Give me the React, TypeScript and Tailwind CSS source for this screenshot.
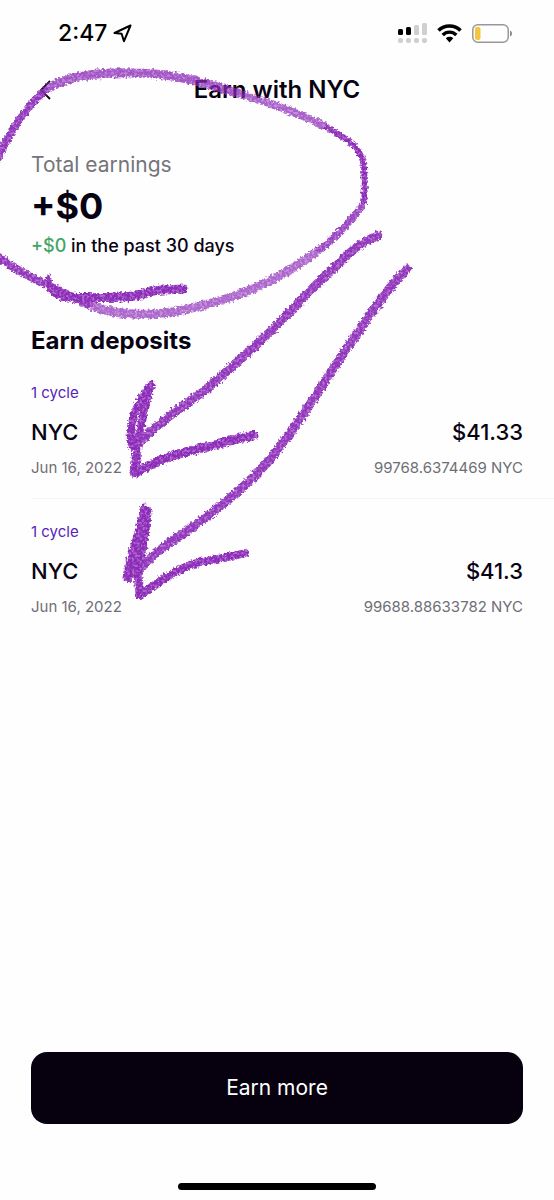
type Deposit = {
  id: number;
  cycle: string;
  name: string;
  date: string;
  value: string;
  amount: string;
};

const deposits: Deposit[] = [
  { id: 1, cycle: '1 cycle', name: 'NYC', date: 'Jun 16, 2022', value: '$41.33', amount: '99768.6374469 NYC' },
  { id: 2, cycle: '1 cycle', name: 'NYC', date: 'Jun 16, 2022', value: '$41.3', amount: '99688.88633782 NYC' },
];

function StatusBar() {
  return (
    <div className="flex h-16 items-center justify-between pt-0.5 pr-[41px] pl-[58px] text-black">
      <div className="flex items-center gap-1.5">
        <span className="text-[23px] leading-8 font-medium">2:47</span>
        <svg width="19" height="19" viewBox="0 0 19 19" fill="none" stroke="currentColor" strokeWidth="2" strokeLinejoin="round" aria-hidden="true">
          <path d="M17.5 1.5 L1.5 9 L8.6 9.8 L11 17.2 Z" />
        </svg>
      </div>
      <div className="flex items-center gap-2.5">
        <svg width="29" height="20" viewBox="0 0 29 20" aria-hidden="true">
          <rect x="0" y="6" width="5" height="6" rx="1.5" />
          <rect x="8" y="4" width="5" height="8" rx="1.5" />
          <g fill="#cfcfcf">
            <rect x="16" y="2" width="5" height="10" rx="1.5" />
            <rect x="24" y="0" width="5" height="12" rx="1.5" />
            <rect x="0" y="15" width="5" height="5" rx="2" />
            <rect x="8" y="15" width="5" height="5" rx="2" />
            <rect x="16" y="15" width="5" height="5" rx="2" />
            <rect x="24" y="15" width="5" height="5" rx="2" />
          </g>
        </svg>
        <svg width="25" height="19" viewBox="0 0 25 19" fill="none" stroke="currentColor" aria-hidden="true">
          <path d="M1.5 6.5 C7.5 0.4 17.5 0.4 23.5 6.5" strokeWidth="3.6" />
          <path d="M5.7 11 C9.5 7.2 15.5 7.2 19.3 11" strokeWidth="3.4" />
          <path d="M8.8 14.2 C11 12.3 14 12.3 16.2 14.2 L12.5 18.4 Z" fill="currentColor" stroke="none" />
        </svg>
        <svg width="41" height="19" viewBox="0 0 41 19" aria-hidden="true">
          <rect x="0.8" y="0.8" width="35.4" height="17.4" rx="5" fill="none" stroke="#99979c" strokeWidth="1.5" />
          <rect x="3" y="3" width="5.5" height="13" rx="2" fill="#f5c63c" />
          <path d="M38 6.5 C40.8 7.5 40.8 11.5 38 12.5 Z" fill="#8f8d92" />
        </svg>
      </div>
    </div>
  );
}

function DepositRow({ deposit }: { deposit: Deposit }) {
  return (
    <li className="border-b border-[#f4f4f6] pt-[21px] pr-[31px] pb-[18px] last:border-b-0">
      <p className="text-[15px] leading-6 text-[#5a22b8]">{deposit.cycle}</p>
      <div className="mt-[11px] flex justify-between text-[22px] leading-8 font-medium">
        <span>{deposit.name}</span>
        <span>{deposit.value}</span>
      </div>
      <div className="mt-2 flex justify-between text-[15px] leading-6 text-[#6f6e76]">
        <span>{deposit.date}</span>
        <span>{deposit.amount}</span>
      </div>
    </li>
  );
}

// Crayon marks drawn over the screen
function Scribbles() {
  return (
    <svg className="pointer-events-none absolute top-0 left-0" width="554" height="640" viewBox="0 0 554 640" fill="none" aria-hidden="true">
      <defs>
        <filter id="crayon" filterUnits="userSpaceOnUse" x="-20" y="40" width="574" height="600" colorInterpolationFilters="sRGB">
          <feTurbulence type="fractalNoise" baseFrequency="0.4" numOctaves="2" seed="4" result="noise" />
          <feDisplacementMap in="SourceGraphic" in2="noise" scale="6" xChannelSelector="R" yChannelSelector="G" result="rough" />
          <feColorMatrix in="noise" type="matrix" values="0 0 0 0 1  0 0 0 0 1  0 0 0 0 1  0 0 4 0 -1.2" result="grain" />
          <feComposite in="rough" in2="grain" operator="in" result="speckled" />
          <feComposite in="speckled" in2="rough" operator="arithmetic" k1="0" k2="0.3" k3="0.7" k4="0" />
          <feGaussianBlur stdDeviation="0.35" />
        </filter>
      </defs>
      <g stroke="#8c2bb8" strokeLinecap="butt" strokeLinejoin="round" filter="url(#crayon)">
        <path d="M-4 163 C4 143 22 109 48 88" strokeWidth="8" opacity="0.95" />
        <path d="M48 88 C70 75 105 72 135 73 C175 73 205 83 240 94" strokeWidth="9" opacity="0.8" />
        <path d="M240 94 C275 104 302 115 325 126" strokeWidth="8" opacity="0.75" />
        <path d="M325 126 C352 141 363 151 364 168 C365 181 365 193 364 204" strokeWidth="6" />
        <path d="M364 204 C350 222 335 239 316 252" strokeWidth="7" opacity="0.88" />
        <path d="M316 252 C275 283 235 298 200 306 C168 315 125 319 92 306" strokeWidth="9" opacity="0.72" />
        <path d="M-4 255 C18 272 34 279 54 288 C68 294 80 302 92 306" strokeWidth="8" opacity="0.95" />
        <g strokeLinecap="round">
          <path d="M48 277 L51 288" strokeWidth="5" />
          <path d="M51 288 C55 294 60 296 68 297 C90 298 125 298 140 295 C153 289 168 290 183 289" strokeWidth="9" />

          <path d="M378 236 C358 242 345 258 333 269 C312 287 290 313 270 332 C248 353 224 374 204 391 C184 406 158 422 136 446" strokeWidth="9" opacity="0.95" />
          <path d="M151 385 C137 402 129 420 131 442 C133 450 137 450 138 440 C142 422 146 400 151 385" strokeWidth="8" />
          <path d="M137 446 L135 473 C158 460 180 452 202 448 C222 444 238 438 254 435" strokeWidth="9" />

          <path d="M407 269 C385 290 365 323 345 351 C320 388 298 426 272 457 C248 486 218 509 190 529 C168 543 150 556 136 574" strokeWidth="9" opacity="0.95" />
          <path d="M144 509 C142 532 130 553 128 578 C138 560 141 535 147 511 C147 532 139 554 138 576 L140 594" strokeWidth="9" />
          <path d="M140 595 C162 580 183 564 206 561 C222 558 235 556 245 553" strokeWidth="8" />
        </g>
      </g>
    </svg>
  );
}

export default function App() {
  return (
    <div className="relative flex min-h-screen flex-col overflow-x-hidden bg-[#fefefe] font-['Inter','Liberation_Sans',sans-serif] text-[#080312]">
      <StatusBar />

      <header className="grid h-[52px] grid-cols-[1fr_auto_1fr] items-center px-[31px]">
        <button type="button" aria-label="Back" className="flex h-8 w-8 items-center pl-2">
          <svg width="12" height="20" viewBox="0 0 12 20" fill="none" stroke="currentColor" strokeWidth="1.8" aria-hidden="true">
            <path d="M11 1 L2 10 L11 19" />
          </svg>
        </button>
        <h1 className="text-[24px] leading-8 font-semibold">Earn with NYC</h1>
      </header>

      <main className="flex-1 pl-[31px]">
        <section className="pt-[33px]">
          <h2 className="text-[21px] leading-8 text-[#75747b]">Total earnings</h2>
          <p className="text-[36px] leading-[51px] font-bold">+$0</p>
          <p className="text-[18px] leading-7 font-medium">
            <span className="text-[#43a466]">+$0</span> in the past 30 days
          </p>
        </section>

        <section className="pt-[65px]">
          <h2 className="mb-[3px] text-[24px] leading-8 font-bold">Earn deposits</h2>
          <ul>
            {deposits.map(d => (
              <DepositRow key={d.id} deposit={d} />
            ))}
          </ul>
        </section>
      </main>

      <footer className="px-[31px] pb-2.5">
        <button type="button" className="h-[72px] w-full rounded-2xl bg-[#07000f] text-[21px] text-white">
          Earn more
        </button>
        <div className="mx-auto mt-[59px] h-[7px] w-[198px] rounded-full bg-black" />
      </footer>

      <Scribbles />
    </div>
  );
}
